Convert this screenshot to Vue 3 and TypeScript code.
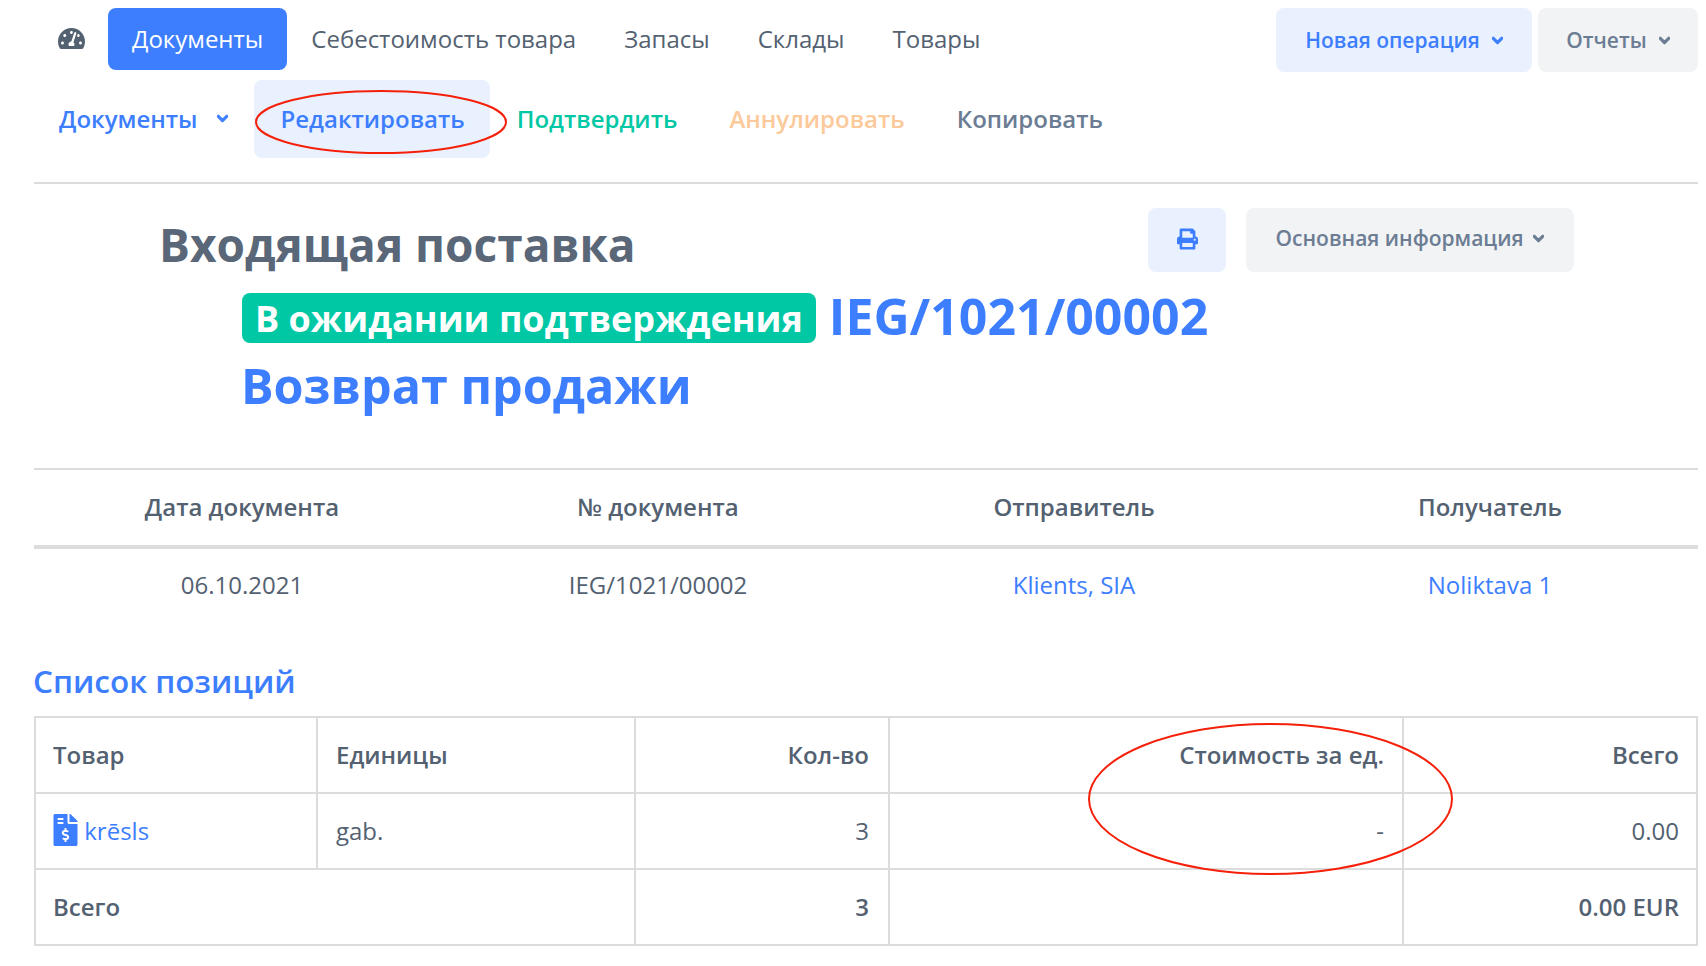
<script setup lang="ts">
const nav: string[] = ['Себестоимость товара', 'Запасы', 'Склады', 'Товары']
const chevron = 'M207.029 381.476L12.686 187.132c-9.373-9.373-9.373-24.569 0-33.941l22.667-22.667c9.357-9.357 24.522-9.375 33.901-.04L224 284.505l154.745-154.021c9.379-9.335 24.544-9.317 33.901.04l22.667 22.667c9.373 9.373 9.373 24.569 0 33.941L240.971 381.476c-9.373 9.372-24.569 9.372-33.942 0z'
</script>

<template>
  <div class="page">
    <header class="top">
      <svg class="gauge" viewBox="0 0 576 512"><path d="M288 32C128.94 32 0 160.94 0 320c0 52.8 14.25 102.26 39.06 144.8 5.61 9.62 16.3 15.2 27.44 15.2h443c11.14 0 21.83-5.58 27.44-15.2C561.75 422.26 576 372.8 576 320c0-159.06-128.94-288-288-288zm0 64c14.71 0 26.58 10.13 30.32 23.65-1.11 2.26-2.64 4.23-3.45 6.67l-9.22 27.67c-5.13 3.49-10.97 6.01-17.64 6.01-17.67 0-32-14.33-32-32S270.33 96 288 96zM96 384c-17.67 0-32-14.33-32-32s14.33-32 32-32 32 14.33 32 32-14.33 32-32 32zm48-160c-17.67 0-32-14.33-32-32s14.33-32 32-32 32 14.33 32 32-14.33 32-32 32zm246.77-72.41l-61.33 184C343.13 347.33 352 364.54 352 384c0 11.72-3.38 22.55-8.88 32H232.88c-5.5-9.45-8.88-20.28-8.88-32 0-33.94 26.5-61.43 59.9-63.59l61.34-184.01c4.17-12.56 17.73-19.45 30.36-15.17 12.57 4.19 19.35 17.79 15.17 30.36zm14.66 57.2l15.52-46.55c3.47-1.29 7.13-2.23 11.05-2.23 17.67 0 32 14.33 32 32s-14.33 32-32 32c-11.38-.01-20.89-6.28-26.57-15.22zM480 384c-17.67 0-32-14.33-32-32s14.33-32 32-32 32 14.33 32 32-14.33 32-32 32z"/></svg>
      <a class="tab active">Документы</a>
      <a v-for="item in nav" :key="item" class="tab">{{ item }}</a>
      <div class="top-actions">
        <button class="btn btn-blue new-op">Новая операция
          <svg class="chev" viewBox="0 0 448 512"><path :d="chevron"/></svg>
        </button>
        <button class="btn btn-grey reports">Отчеты
          <svg class="chev" viewBox="0 0 448 512"><path :d="chevron"/></svg>
        </button>
      </div>
    </header>

    <nav class="sub">
      <a class="sub-link docs">Документы
        <svg class="chev" viewBox="0 0 448 512"><path :d="chevron"/></svg>
      </a>
      <a class="sub-link edit">Редактировать
        <svg class="ring ring-edit" viewBox="0 0 252 64" preserveAspectRatio="none"><ellipse cx="126" cy="32" rx="125" ry="31"/></svg>
      </a>
      <a class="sub-link confirm">Подтвердить</a>
      <a class="sub-link cancel">Аннулировать</a>
      <a class="sub-link copy">Копировать</a>
    </nav>

    <section class="head">
      <div class="head-top">
        <h1>Входящая поставка</h1>
        <div class="head-actions">
          <button class="btn btn-blue print">
            <svg viewBox="0 0 512 512"><path d="M448 192V77.25c0-8.49-3.37-16.62-9.37-22.63L393.37 9.37c-6-6-14.14-9.37-22.63-9.37H96C78.33 0 64 14.33 64 32v160c-35.35 0-64 28.65-64 64v112c0 8.84 7.16 16 16 16h48v96c0 17.67 14.33 32 32 32h320c17.67 0 32-14.33 32-32v-96h48c8.84 0 16-7.16 16-16V256c0-35.35-28.65-64-64-64zm-64 256H128v-96h256v96zm0-224H128V64h192v48c0 8.84 7.16 16 16 16h48v96zm48 72c-13.25 0-24-10.75-24-24 0-13.26 10.75-24 24-24s24 10.74 24 24c0 13.25-10.75 24-24 24z"/></svg>
          </button>
          <button class="btn btn-grey info">Основная информация
            <svg class="chev" viewBox="0 0 448 512"><path :d="chevron"/></svg>
          </button>
        </div>
      </div>
      <div class="doc-line">
        <span class="badge">В ожидании подтверждения</span>
        <span class="doc-no">IEG/1021/00002</span>
      </div>
      <div class="doc-type">Возврат продажи</div>
    </section>

    <section class="meta">
      <div class="meta-row meta-head">
        <div>Дата документа</div>
        <div>№ документа</div>
        <div>Отправитель</div>
        <div>Получатель</div>
      </div>
      <div class="meta-row meta-body">
        <div>06.10.2021</div>
        <div>IEG/1021/00002</div>
        <div class="link">Klients, SIA</div>
        <div class="link">Noliktava 1</div>
      </div>
    </section>

    <h2>Список позиций</h2>

    <div class="table-wrap">
      <table>
        <colgroup>
          <col class="c1" /><col class="c2" /><col class="c3" /><col class="c4" /><col class="c5" />
        </colgroup>
        <tbody>
          <tr class="bold">
            <td>Товар</td>
            <td class="units">Единицы</td>
            <td class="r">Кол-во</td>
            <td class="r cost">Стоимость за ед.</td>
            <td class="r">Всего</td>
          </tr>
          <tr>
            <td class="link product">
              <svg viewBox="0 0 384 512"><path d="M377 105L279.1 7c-4.5-4.5-10.6-7-17-7H256v128h128v-6.1c0-6.3-2.5-12.4-7-16.9zm-153 31V0H24C10.7 0 0 10.7 0 24v464c0 13.3 10.7 24 24 24h336c13.3 0 24-10.7 24-24V160H248c-13.2 0-24-10.8-24-24zM64 72c0-4.42 3.58-8 8-8h80c4.42 0 8 3.58 8 8v16c0 4.42-3.58 8-8 8H72c-4.42 0-8-3.58-8-8V72zm0 80v-16c0-4.42 3.58-8 8-8h80c4.42 0 8 3.58 8 8v16c0 4.42-3.58 8-8 8H72c-4.42 0-8-3.58-8-8zm144 263.88V440c0 4.42-3.58 8-8 8h-16c-4.42 0-8-3.58-8-8v-24.29c-11.29-.58-22.27-4.52-31.37-11.35-3.9-2.93-4.1-8.77-.57-12.14l11.75-11.21c2.77-2.64 6.89-2.76 10.13-.73 3.87 2.42 8.26 3.72 12.82 3.72h28.11c6.5 0 11.8-5.92 11.8-13.19 0-5.95-3.61-11.19-8.77-12.73l-45-13.5c-18.59-5.58-31.58-23.42-31.58-43.39 0-24.52 19.05-44.44 42.67-45.07V232c0-4.42 3.58-8 8-8h16c4.42 0 8 3.58 8 8v24.29c11.29.58 22.27 4.51 31.37 11.35 3.9 2.93 4.1 8.77.57 12.14l-11.75 11.21c-2.77 2.64-6.89 2.76-10.13.73-3.87-2.43-8.26-3.72-12.82-3.72h-28.11c-6.5 0-11.8 5.92-11.8 13.19 0 5.95 3.61 11.19 8.77 12.73l45 13.5c18.59 5.58 31.58 23.42 31.58 43.39 0 24.53-19.05 44.44-42.67 45.07z"/></svg>
              krēsls
            </td>
            <td class="units">gab.</td>
            <td class="r">3</td>
            <td class="r cost">-</td>
            <td class="r">0.00</td>
          </tr>
          <tr class="bold">
            <td colspan="2">Всего</td>
            <td class="r">3</td>
            <td class="r cost"></td>
            <td class="r">0.00 EUR</td>
          </tr>
        </tbody>
      </table>
      <svg class="ring ring-cost" viewBox="0 0 365 152" preserveAspectRatio="none"><ellipse cx="182.5" cy="76" rx="181.5" ry="75"/></svg>
    </div>
  </div>
</template>

<style scoped>
.page {
  width: 1706px;
  height: 966px;
  overflow: hidden;
  box-sizing: border-box;
  padding: 8px 8px 0 34px;
  font-family: "Open Sans", "Noto Sans", sans-serif;
  color: #536171;
  background: #fff;
}
.top {
  display: flex;
  align-items: flex-start;
  height: 64px;
}
.gauge {
  width: 27px;
  height: 25px;
  margin: 18px 23px 0 24px;
  fill: #536171;
  flex: none;
}
.tab {
  height: 62px;
  box-sizing: border-box;
  padding: 0 24px 2px;
  display: flex;
  align-items: center;
  font-size: 24px;
  border-radius: 8px;
  white-space: nowrap;
}
.tab.active {
  background: #3d7eff;
  color: #fff;
}
.top-actions {
  margin-left: auto;
  display: flex;
  gap: 6px;
}
.btn {
  border: 0;
  border-radius: 8px;
  font-family: inherit;
  font-weight: 600;
  font-size: 21px;
  display: flex;
  align-items: center;
  justify-content: center;
  height: 64px;
  white-space: nowrap;
}
.btn-blue { background: #e9f1ff; color: #3d7eff; }
.btn-grey { background: #f2f3f5; color: #6b7c93; }
.chev {
  width: 11px;
  height: 13px;
  fill: currentColor;
  stroke: currentColor;
  stroke-width: 50;
  flex: none;
}
.new-op { width: 256px; gap: 12px; }
.reports { width: 160px; gap: 12px; }

.sub {
  display: flex;
  align-items: stretch;
  height: 78px;
  margin-top: 8px;
  padding-bottom: 24px;
  border-bottom: 2px solid #dcdcdc;
  font-weight: 600;
  font-size: 24px;
}
.sub-link {
  position: relative;
  display: flex;
  align-items: center;
  padding: 0 26px 2px;
  white-space: nowrap;
}
.docs { color: #3d7eff; padding: 0 26px 2px 25px; gap: 19px; }
.edit { color: #3d7eff; background: #e9f1ff; border-radius: 8px; margin-right: 1px; padding: 0 25px 2px 27px; }
.confirm { color: #00c7a4; }
.cancel { color: #fbc99a; }
.copy { color: #6b7c93; }

.head {
  height: 286px;
  box-sizing: border-box;
  padding: 24px 0 0 125px;
  border-bottom: 2px solid #dcdcdc;
}
.head-top {
  display: flex;
  align-items: flex-start;
  justify-content: space-between;
  width: 1415px;
}
h1 {
  margin: 6px 0 0;
  font-size: 46px;
  line-height: 60px;
  font-weight: 700;
  color: #596778;
}
.head-actions { display: flex; gap: 20px; }
.print { width: 78px; }
.print svg { width: 21px; height: 22px; fill: currentColor; margin-bottom: 2px; }
.info { width: 328px; gap: 10px; padding-bottom: 5px; }
.doc-line {
  display: flex;
  align-items: flex-start;
  margin: 19px 0 0 83px;
}
.badge {
  background: #00c7a4;
  color: #fff;
  border-radius: 8px;
  font-size: 36px;
  font-weight: 700;
  height: 50px;
  line-height: 52px;
  padding: 0 13px;
  white-space: nowrap;
}
.doc-no {
  margin: -2px 0 0 13px;
  color: #3d7eff;
  font-size: 50px;
  font-weight: 700;
  line-height: 50px;
}
.doc-type {
  margin: 12px 0 0 82px;
  color: #3d7eff;
  font-size: 48.5px;
  font-weight: 700;
  line-height: 60px;
}

.meta-row {
  display: grid;
  grid-template-columns: repeat(4, 1fr);
  text-align: center;
  font-size: 24px;
}
.meta-head {
  height: 75px;
  align-items: center;
  font-weight: 600;
  border-bottom: 4px solid #dcdcdc;
}
.meta-head > div { margin-bottom: 3px; }
.meta-body {
  height: 78px;
  align-items: center;
}
.meta-body > div { margin-bottom: 8px; }
.link { color: #3d7eff; }

h2 {
  margin: 32px 0 0 -1px;
  font-size: 31.5px;
  line-height: 44px;
  font-weight: 600;
  color: #3d7eff;
}
.table-wrap {
  position: relative;
  margin-top: 13px;
}
table {
  width: 1664px;
  table-layout: fixed;
  border-collapse: collapse;
  font-size: 24px;
}
.c1 { width: 282px; }
.c2 { width: 318px; }
.c3 { width: 254px; }
.c4 { width: 514px; }
td {
  height: 76px;
  box-sizing: border-box;
  border: 2px solid #dcdcdc;
  padding: 0 19px 1px 17px;
  white-space: nowrap;
}
td:last-child { padding-right: 17px; }
td.units { padding-left: 18px; }
td.cost { padding-right: 18px; }
.bold td { font-weight: 600; }
.r { text-align: right; }
.product svg {
  width: 25px;
  height: 32px;
  fill: #3d7eff;
  vertical-align: -6px;
}
.ring {
  position: absolute;
  fill: none;
  stroke: #f5200a;
  stroke-width: 2;
  pointer-events: none;
  overflow: visible;
}
.ring-edit {
  left: 1px;
  top: 10px;
  width: 252px;
  height: 64px;
}
.ring-cost {
  left: 1054px;
  top: 7px;
  width: 365px;
  height: 152px;
}
</style>
